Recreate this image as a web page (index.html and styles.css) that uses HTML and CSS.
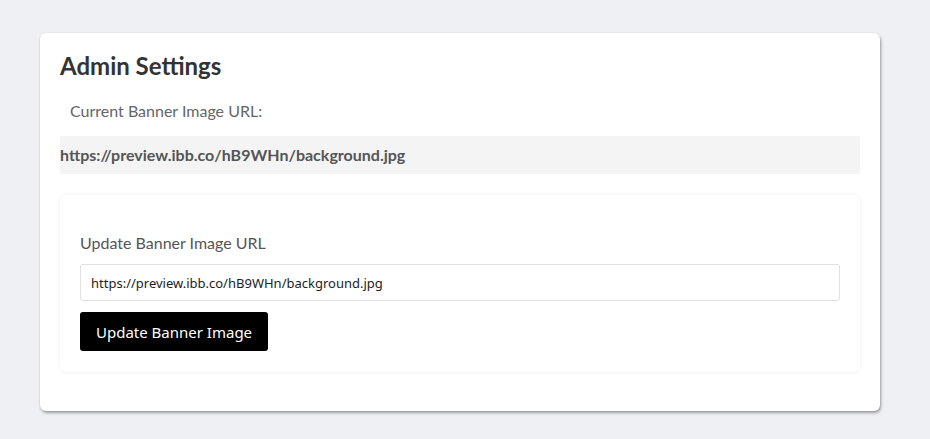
FILE: index.html
```html
<!DOCTYPE html>
<html>
<head>
<meta charset="utf-8">
<link rel="stylesheet" href="styles.css">
</head>
<body>
<div class="page">
  <section class="card">
    <h1 class="title">Admin Settings</h1>
    <p class="current-label">Current Banner Image URL:</p>
    <div class="current-url">https://preview.ibb.co/hB9WHn/background.jpg</div>
    <div class="panel">
      <label class="field-label" for="banner">Update Banner Image URL</label>
      <input id="banner" class="field-input" type="text" value="https://preview.ibb.co/hB9WHn/background.jpg">
      <button class="btn" type="button">Update Banner Image</button>
    </div>
  </section>
</div>
</body>
</html>
```

FILE: styles.css
```css
html, body {
  margin: 0;
  padding: 0;
  background: #eff0f4;
}
body {
  font-family: "Lato", "Liberation Sans", sans-serif;
}
.page {
  padding: 33px 50px 28px 40px;
}
.card {
  width: 840px;
  box-sizing: border-box;
  background: #fff;
  border-radius: 6px;
  box-shadow: 1px 2px 3px rgba(0, 0, 0, 0.35), 0 0 2px rgba(0, 0, 0, 0.08);
  padding: 20px 20px 39px 20px;
}
.title {
  margin: 0;
  font-size: 24px;
  font-weight: 700;
  color: #333;
  line-height: 26px;
}
.current-label {
  margin: 22px 0 0 10px;
  font-size: 16px;
  color: #666;
  line-height: 20px;
}
.current-url {
  margin-top: 15px;
  height: 38px;
  line-height: 38px;
  background: #f4f4f4;
  font-size: 16px;
  font-weight: 700;
  color: #555;
  border-radius: 2px;
}
.panel {
  margin-top: 21px;
  background: #fff;
  border-radius: 6px;
  box-shadow: 0 0 4px rgba(0, 0, 0, 0.07);
  padding: 38px 20px 21px 20px;
  display: flex;
  flex-direction: column;
  align-items: flex-start;
}
.field-label {
  font-size: 16px;
  color: #555;
  line-height: 19px;
}
.field-input {
  margin-top: 12px;
  width: 760px;
  height: 37px;
  box-sizing: border-box;
  border: 1px solid #e0e0e0;
  border-radius: 3px;
  padding: 0 10px;
  font-family: "Noto Sans", "DejaVu Sans", sans-serif;
  font-size: 13px;
  color: #222;
  background: #fff;
  outline: none;
}
.btn {
  margin-top: 11px;
  height: 39px;
  padding: 0 16px;
  background: #000;
  color: #fff;
  border: 0;
  border-radius: 3px;
  font-family: "Noto Sans", "DejaVu Sans", sans-serif;
  font-size: 15px;
  cursor: pointer;
}
```
